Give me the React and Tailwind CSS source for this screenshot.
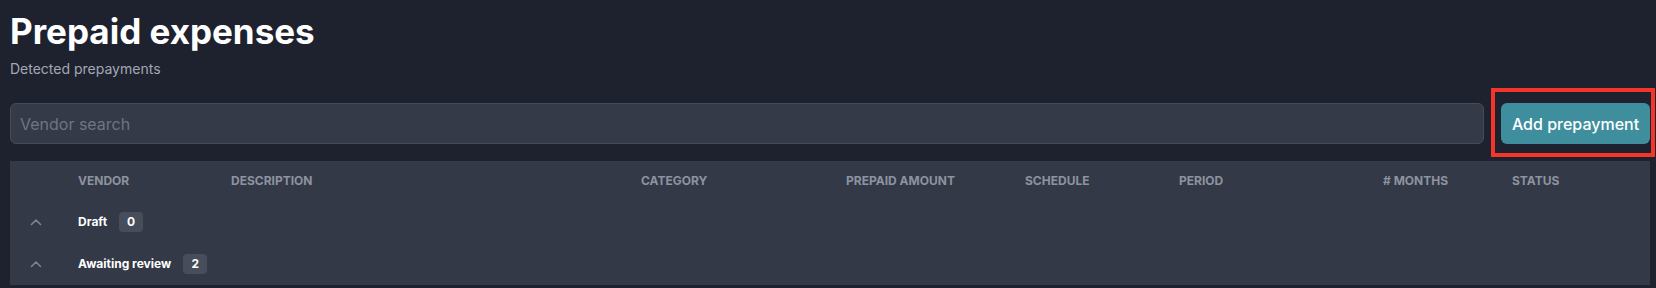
import React from 'react';

const columns = [
  'Vendor',
  'Description',
  'Category',
  'Prepaid amount',
  'Schedule',
  'Period',
  '# Months',
  'Status',
];

const groups = [
  { label: 'Draft', count: 0 },
  { label: 'Awaiting review', count: 2 },
];

const gridCols = 'grid grid-cols-[68px_153px_410px_205px_179px_154px_204px_129px_1fr]';

const ChevronUp = () => (
  <svg width="12" height="8" viewBox="0 0 12 8" fill="none" className="ml-[20px]">
    <polyline points="1.5,6.5 6,2 10.5,6.5" stroke="#7c8391" strokeWidth="1.6" strokeLinecap="round" strokeLinejoin="round" />
  </svg>
);

export default function App() {
  return (
    <div className="min-h-[288px] bg-[#1e222f] pl-[10px] pr-[6px] pt-[11px] font-['Inter','Liberation_Sans',sans-serif] text-white">
      {/* Header */}
      <h1 className="text-[35px] font-bold leading-10 text-white">Prepaid expenses</h1>
      <p className="mt-2 text-sm leading-5 text-[#a3a8b3]">Detected prepayments</p>

      {/* Search + action */}
      <div className="mt-6 flex items-center gap-[17px]">
        <input
          type="text"
          placeholder="Vendor search"
          className="h-[41px] flex-1 rounded-md border border-[#454b59] bg-[#343a48] px-[9px] text-base text-white placeholder:text-[#6f7583] outline-none"
        />
        <div className="relative">
          <button className="h-[41px] w-[149px] rounded-md bg-[#3e8e9e] text-base font-medium text-white">
            Add prepayment
          </button>
          <span className="pointer-events-none absolute -left-[10px] -right-[5px] -top-[15px] -bottom-[13px] border-[4px] border-[#f4352a]" />
        </div>
      </div>

      {/* Table */}
      <div className="mt-[17px] w-[1640px] bg-[#333946]">
        <div className={`${gridCols} h-10 items-center`}>
          <div />
          {columns.map((col) => (
            <div key={col} className="text-xs font-bold uppercase text-[#8d93a0]">
              {col}
            </div>
          ))}
        </div>
        {groups.map((g) => (
          <div key={g.label} className={`${gridCols} h-[42px] items-center`}>
            <div className="flex items-center">
              <ChevronUp />
            </div>
            <div className="col-span-8 flex items-center gap-3">
              <span className="text-xs font-bold text-white">{g.label}</span>
              <span className="flex h-5 min-w-6 items-center justify-center rounded bg-[#474d5a] px-2 text-xs font-bold text-white">
                {g.count}
              </span>
            </div>
          </div>
        ))}
      </div>
    </div>
  );
}
